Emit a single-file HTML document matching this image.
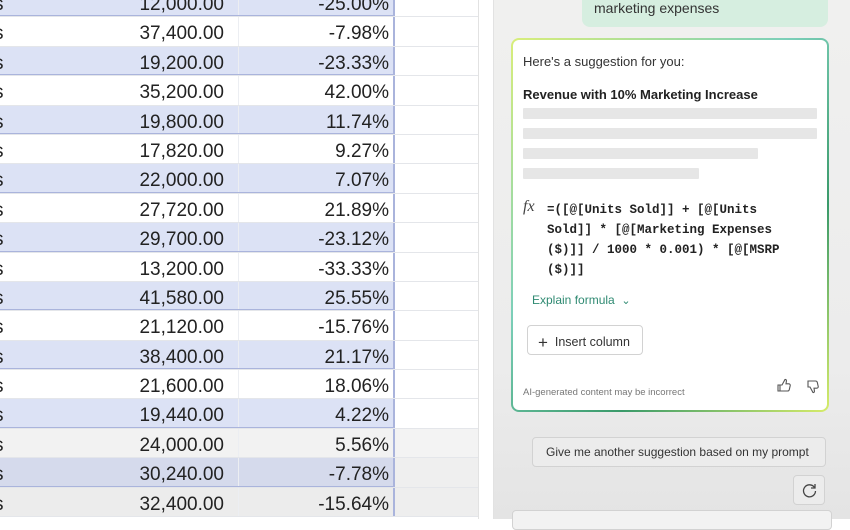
<!DOCTYPE html>
<html><head><meta charset="utf-8"><style>
*{margin:0;padding:0;box-sizing:border-box}
body{width:850px;height:519px;overflow:hidden;background:#fff;font-family:"Liberation Sans",sans-serif;position:relative}
.tbl{position:absolute;left:0;top:-12px;width:478px}
.row{position:relative;width:478px;height:29.4px;border-bottom:1px solid #e4e6ea}
.a{position:absolute;left:0;top:0;width:395px;height:100%;border-right:2px solid #aab4dc}
.b .a{background:#dce2f5;border-bottom:1px solid #aab4dc}
.n{position:absolute;right:169px;top:6px;font-size:19px;color:#222}
.p{position:absolute;right:4px;top:6px;font-size:19px;color:#222}
.s{position:absolute;left:-6px;top:6px;font-size:19px;color:#222}
.d{position:absolute;left:238px;top:0;height:100%;border-left:1px solid #eceef2}
.sb{position:absolute;left:478px;top:0;width:16px;height:519px;background:#fff;border-left:1px solid #e2e2e2;border-right:1px solid #e2e2e2}
.panel{position:absolute;left:494px;top:0;width:356px;height:519px;background:linear-gradient(#f0f0ef,#ececec 70%,#e4e4e4)}
.bub{position:absolute;left:582px;top:-10px;width:246px;height:37px;background:#d6eee0;border-radius:8px;font-size:14px;color:#333;padding:10px 0 0 12px}
.card{position:absolute;left:511px;top:38px;width:318px;height:374px;border-radius:8px;padding:2px;background:linear-gradient(135deg,#d9ee7a,#7ccfb9 40%,#3a9a6a 70%,#d7ec6a)}
.in{width:100%;height:100%;background:#fff;border-radius:6px;position:relative}
.t{position:absolute;font-size:13px;color:#333}
.bar{position:absolute;left:10px;height:11px;background:#e6e6e6;border-radius:1px}
.code{position:absolute;left:34px;top:160px;font-family:"Liberation Mono",monospace;font-size:12.5px;font-weight:bold;line-height:20px;color:#222;white-space:pre}
.btn{position:absolute;border:1px solid #d2d2d2;border-radius:4px;background:#fff;font-size:12.5px;color:#333}
</style></head><body>
<div class="tbl">
<div class="row b"><div class="a"><span class="s">s</span><div class="d"></div><span class="n">12,000.00</span><span class="p">-25.00%</span></div></div>
<div class="row"><div class="a"><span class="s">s</span><div class="d"></div><span class="n">37,400.00</span><span class="p">-7.98%</span></div></div>
<div class="row b"><div class="a"><span class="s">s</span><div class="d"></div><span class="n">19,200.00</span><span class="p">-23.33%</span></div></div>
<div class="row"><div class="a"><span class="s">s</span><div class="d"></div><span class="n">35,200.00</span><span class="p">42.00%</span></div></div>
<div class="row b"><div class="a"><span class="s">s</span><div class="d"></div><span class="n">19,800.00</span><span class="p">11.74%</span></div></div>
<div class="row"><div class="a"><span class="s">s</span><div class="d"></div><span class="n">17,820.00</span><span class="p">9.27%</span></div></div>
<div class="row b"><div class="a"><span class="s">s</span><div class="d"></div><span class="n">22,000.00</span><span class="p">7.07%</span></div></div>
<div class="row"><div class="a"><span class="s">s</span><div class="d"></div><span class="n">27,720.00</span><span class="p">21.89%</span></div></div>
<div class="row b"><div class="a"><span class="s">s</span><div class="d"></div><span class="n">29,700.00</span><span class="p">-23.12%</span></div></div>
<div class="row"><div class="a"><span class="s">s</span><div class="d"></div><span class="n">13,200.00</span><span class="p">-33.33%</span></div></div>
<div class="row b"><div class="a"><span class="s">s</span><div class="d"></div><span class="n">41,580.00</span><span class="p">25.55%</span></div></div>
<div class="row"><div class="a"><span class="s">s</span><div class="d"></div><span class="n">21,120.00</span><span class="p">-15.76%</span></div></div>
<div class="row b"><div class="a"><span class="s">s</span><div class="d"></div><span class="n">38,400.00</span><span class="p">21.17%</span></div></div>
<div class="row"><div class="a"><span class="s">s</span><div class="d"></div><span class="n">21,600.00</span><span class="p">18.06%</span></div></div>
<div class="row b"><div class="a"><span class="s">s</span><div class="d"></div><span class="n">19,440.00</span><span class="p">4.22%</span></div></div>
<div class="row" style="background:#f3f3f3"><div class="a" style="background:#f2f2f2"><span class="s">s</span><div class="d"></div><span class="n">24,000.00</span><span class="p">5.56%</span></div></div>
<div class="row b" style="background:#efefef"><div class="a" style="background:#d5daec"><span class="s">s</span><div class="d"></div><span class="n">30,240.00</span><span class="p">-7.78%</span></div></div>
<div class="row" style="background:#eeeeee"><div class="a" style="background:#ececec"><span class="s">s</span><div class="d"></div><span class="n">32,400.00</span><span class="p">-15.64%</span></div></div>
</div>
<div class="sb"></div>
<div class="panel"></div>
<div class="bub">marketing expenses</div>
<div class="card"><div class="in">
<div class="t" style="left:10px;top:14px">Here's a suggestion for you:</div>
<div class="t" style="left:10px;top:47px;font-weight:bold;color:#222">Revenue with 10% Marketing Increase</div>
<div class="bar" style="top:68px;width:294px"></div>
<div class="bar" style="top:88px;width:294px"></div>
<div class="bar" style="top:108px;width:235px"></div>
<div class="bar" style="top:128px;width:176px"></div>
<div class="t" style="left:10px;top:158px;font-family:'Liberation Serif',serif;font-style:italic;font-size:16px;color:#444">fx</div>
<div class="code">=([@[Units Sold]] + [@[Units
Sold]] * [@[Marketing Expenses
($)]] / 1000 * 0.001) * [@[MSRP
($)]]</div>
<div class="t" style="left:19px;top:253px;font-size:12px;color:#2f8a72">Explain formula &nbsp;<span style="font-size:11px">&#8964;</span></div>
<div class="btn" style="left:14px;top:285px;width:116px;height:30px;padding:7px 0 0 10px"><span style="font-size:17px;font-weight:300;vertical-align:-2px">+</span>&nbsp; Insert column</div>
<div class="t" style="left:10px;top:347px;font-size:9.5px;color:#777">AI-generated content may be incorrect</div>
<svg style="position:absolute;left:264px;top:338px" width="14" height="15" viewBox="0 0 14 15" fill="none" stroke="#555" stroke-width="1.1"><path d="M3 7v6h7.5c1 0 1.6-.6 1.8-1.4l.9-4c.2-1-.5-1.8-1.5-1.8H9l.4-2.6C9.6 2 8.8 1.2 8 1.5L5 7H3z M1 7h2v6H1z"/></svg>
<svg style="position:absolute;left:292px;top:339px" width="14" height="15" viewBox="0 0 14 15" fill="none" stroke="#555" stroke-width="1.1"><path d="M3 8V2h7.5c1 0 1.6.6 1.8 1.4l.9 4c.2 1-.5 1.8-1.5 1.8H9l.4 2.6c.2 1.2-.6 2-1.4 1.7L5 8H3z"/></svg>
</div></div>
<div class="btn" style="left:532px;top:437px;width:294px;height:30px;padding:7px 0 0 13px;background:#ececec;font-size:12px">Give me another suggestion based on my prompt</div>
<div class="btn" style="left:793px;top:475px;width:32px;height:30px;background:#ececec"><svg style="position:absolute;left:7px;top:6px" width="17" height="17" viewBox="0 0 17 17" fill="none" stroke="#444" stroke-width="1.3"><path d="M13.5 5.5A6 6 0 1 0 14.5 9"/><path d="M14 2v4h-4"/></svg></div>
<div class="btn" style="left:512px;top:510px;width:320px;height:20px;background:#f2f2f2"></div>
</body></html>
